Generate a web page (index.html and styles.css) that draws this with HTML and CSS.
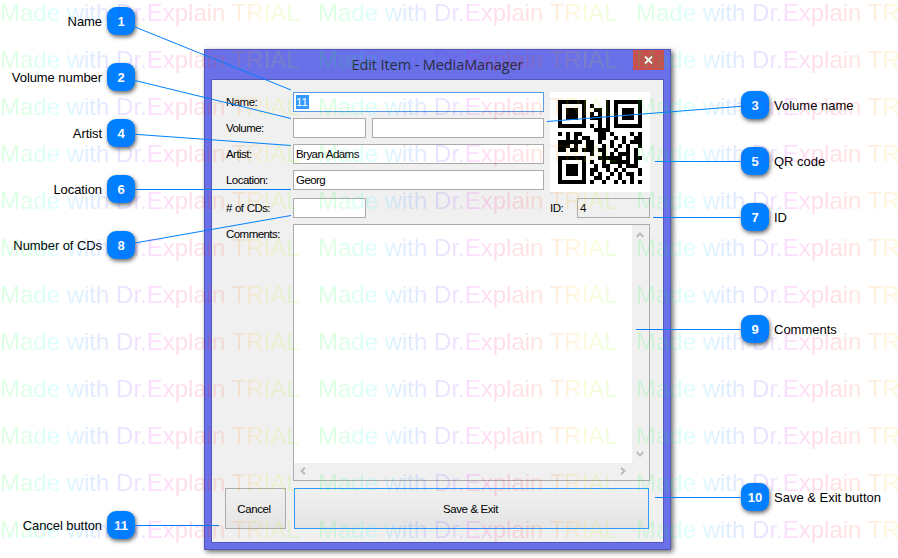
FILE: index.html
```
<!DOCTYPE html>
<html lang="en">
<head>
<meta charset="utf-8">
<title>Edit Item - MediaManager</title>
<link rel="stylesheet" href="styles.css">
</head>
<body>
<main class="page">
  <div class="callouts left">
    <div class="callout"><span>Name</span><b>1</b></div>
    <div class="callout"><span>Volume number</span><b>2</b></div>
    <div class="callout"><span>Artist</span><b>4</b></div>
    <div class="callout"><span>Location</span><b>6</b></div>
    <div class="callout"><span>Number of CDs</span><b>8</b></div>
    <div class="callout last"><span>Cancel button</span><b>11</b></div>
  </div>

  <section class="window">
    <header class="titlebar">
      <h1>Edit Item - MediaManager</h1>
      <div class="close"><svg width="9" height="8" viewBox="0 0 9 8"><path d="M1 .5 8 7.5M8 .5 1 7.5" stroke="#fff" stroke-width="1.8"/></svg></div>
    </header>
    <div class="client">
      <div class="top">
        <div class="fields">
          <label>Name:</label><div class="input focus"><mark>11</mark></div>
          <label>Volume:</label><div class="pair"><div class="input short"></div><div class="input grow"></div></div>
          <label>Artist:</label><div class="input">Bryan Adams</div>
          <label>Location:</label><div class="input">Georg</div>
        </div>
        <div class="qr"><svg id="qr" width="84" height="84" viewBox="0 0 21 21" shape-rendering="crispEdges"></svg></div>
      </div>
      <div class="meta">
        <label># of CDs:</label><div class="input short"></div>
        <label class="id">ID:</label><div class="input short readonly">4</div>
      </div>
      <div class="comments">
        <label>Comments:</label>
        <div class="textarea">
          <div class="paper"></div>
          <div class="vbar">
            <svg width="8" height="6" viewBox="0 0 8 6"><path d="M.7 5 4 1.5 7.3 5"/></svg>
            <svg width="8" height="6" viewBox="0 0 8 6"><path d="M.7 1 4 4.5 7.3 1"/></svg>
          </div>
          <div class="hbar">
            <svg width="6" height="8" viewBox="0 0 6 8"><path d="M5 .7 1.5 4 5 7.3"/></svg>
            <svg width="6" height="8" viewBox="0 0 6 8"><path d="M1 .7 4.5 4 1 7.3"/></svg>
          </div>
        </div>
      </div>
      <div class="buttons">
        <div class="button cancel">Cancel</div>
        <div class="button save">Save &amp; Exit</div>
      </div>
    </div>
  </section>

  <div class="callouts right">
    <div class="callout"><b>3</b><span>Volume name</span></div>
    <div class="callout"><b>5</b><span>QR code</span></div>
    <div class="callout"><b>7</b><span>ID</span></div>
    <div class="callout nine"><b>9</b><span>Comments</span></div>
    <div class="callout ten"><b>10</b><span>Save &amp; Exit button</span></div>
  </div>

  <svg class="lines" width="898" height="558" viewBox="0 0 898 558">
    <path d="M135 27 291 90M135 80.5 291 118.5M135 134.3 291 145.5M135 189.5H291M135 243 291 215.5M135 525.5H219M741 106.3 547 121.5M741 161.5H655M741 217.5H653M741 329.5H636M741 497.5H655"/>
  </svg>
  <div class="watermark" id="watermark"></div>
</main>
<script src="page.js"></script>
</body>
</html>
```
FILE: styles.css
```
* { box-sizing: border-box; }
body { margin: 0; background: #fff; font-family: "Liberation Sans", Arial, sans-serif; }
.page { position: relative; width: 898px; height: 558px; overflow: hidden; display: flex; }

.callouts { display: flex; flex-direction: column; gap: 28px; font-size: 13px; color: #000; white-space: nowrap; flex: none; }
.left { width: 135px; padding: 7px 0 19px; }
.right { width: 157px; margin-left: 70px; padding-top: 91px; }
.callout { display: flex; align-items: center; gap: 5px; height: 28px; flex: none; }
.left .callout { justify-content: flex-end; }
.left .callout span { letter-spacing: -.07px; }
.last { margin-top: auto; }
.nine { margin-top: 56px; }
.ten { margin-top: 112px; }
.callout b { width: 28px; height: 28px; border-radius: 9px; background: #0080ff; color: #fff; display: flex; align-items: center; justify-content: center; box-shadow: 1px 2px 4px rgba(0,0,0,.6); }

.window { width: 467px; height: 501px; margin: 49px 0 0 69px; flex: none; background: #6a70e8; border: 1px solid #5256bd; box-shadow: 2px 2px 5px rgba(0,0,0,.6); padding: 0 6px 6px; }
.titlebar { height: 29px; display: flex; position: relative; justify-content: center; }
.titlebar h1 { margin: 0; font: 400 14.5px/29px "Open Sans", "Noto Sans", sans-serif; color: #292b3b; white-space: nowrap; letter-spacing: -.1px; }
.close { position: absolute; right: 0; top: 0; width: 31px; height: 20px; background: #c75050; display: flex; align-items: center; justify-content: center; }
.client { height: 464px; border: 1px solid #5256bd; background: #f0f0f0; padding: 12px 12px 12px 13px; font-size: 11.5px; letter-spacing: -.55px; word-spacing: .5px; color: #000; }
.top { display: flex; gap: 6px; align-items: flex-start; }
.fields { display: grid; grid-template-columns: 68px 251px; row-gap: 6px; }
label { line-height: 20px; padding-left: 1px; }
.input { height: 20px; border: 1px solid #ababab; background: #fff; line-height: 18px; padding-left: 2px; }
.focus { border-color: #569de5; }
mark { background: #3399ff; color: #fff; display: inline-block; line-height: 14px; padding: 0 1px 0 0; letter-spacing: 0; }
.pair { display: flex; gap: 6px; }
.short { width: 73px; }
.grow { flex: 1; }
.qr { width: 100px; height: 100px; background: #fff; padding: 8px; }
.qr svg { display: block; }
.meta { display: grid; grid-template-columns: 68px 73px 184px 27px 73px; margin-top: 6px; }
.meta .id { grid-column: 4; padding: 0; }
.meta .readonly { grid-column: 5; background: #f0f0f0; }
.comments { display: grid; grid-template-columns: 68px 357px; margin-top: 6px; }
.textarea { height: 257px; border: 1px solid #ababab; background: #f0f0f0; display: grid; grid-template-columns: 338px 17px; grid-template-rows: 238px 17px; }
.textarea path { fill: none; stroke: #bcbcbc; stroke-width: 2; }
.paper { background: #fff; }
.vbar { display: flex; flex-direction: column; justify-content: space-between; align-items: center; padding: 7px 2px 6px 0; }
.hbar { display: flex; justify-content: space-between; align-items: center; padding: 0 6px 1px 6px; }
.buttons { display: flex; gap: 8px; margin-top: 7px; }
.button { height: 41px; border: 1px solid #ababab; background: linear-gradient(#f0f0f0, #e4e4e4); display: flex; align-items: center; justify-content: center; letter-spacing: -.4px; word-spacing: 0; }
.cancel { width: 61px; padding-right: 3px; }
.save { width: 355px; padding-right: 2px; border-color: #3399ff; }

.lines { position: absolute; left: 0; top: 0; }
.lines path { stroke: #0080ff; stroke-width: 1; fill: none; }

.watermark { position: absolute; left: 0; top: -1px; width: 960px; display: grid; grid-template-columns: repeat(3, 318px); grid-auto-rows: 47px; opacity: .13; pointer-events: none; }
.watermark span { justify-self: start; font-size: 24px; line-height: 27px; width: 300px; white-space: nowrap; letter-spacing: 0; color: transparent; background: linear-gradient(90deg, #00ff30 0, #00ff50 25px, #00ffff 55px, #0080ff 85px, #4040ff 115px, #8020ff 135px, #ff00ff 155px, #ff0060 180px, #ff2020 210px, #ff8000 240px, #ffe000 265px, #70ff00 298px); background-clip: text; -webkit-background-clip: text; }
```
FILE: page.js
```
const modules = [
  "#######.....#.#######",
  "#.....#.#...#.#.....#",
  "#.###.#..##.#.#.###.#",
  "#.###.#.#.#.#.#.###.#",
  "#.###.#.###.#.#.###.#",
  "#.....#...#.#.#.....#",
  "#######.#.#.#.#######",
  ".........####........",
  "#.#.##....##.#....#.#",
  "..#.#.##..##..#.#..##",
  "######.##.#..#..#.###",
  "###.#..##..#.#.#.#..#",
  "##.##.###.##..#..#.#.",
  "........#..#.#.###.#.",
  "#######...######.#.##",
  "#.....#.#..#.#####.#.",
  "#.###.#..#.##..#.###.",
  "#.###.#.##..#.#.#...#",
  "#.###.#.#.#..#.#.##.#",
  "#.....#..##.#..#..#..",
  "#######.#..#..#.#.#.#"
];
document.getElementById("qr").innerHTML = modules.map((row, y) =>
  [...row].map((c, x) => c === "#" ? `<rect x="${x}" y="${y}" width="1" height="1"/>` : "").join("")
).join("");

const watermark = document.getElementById("watermark");
for (let i = 0; i < 36; i++) {
  const s = document.createElement("span");
  s.textContent = "Made with Dr.Explain TRIAL";
  watermark.appendChild(s);
}
```
